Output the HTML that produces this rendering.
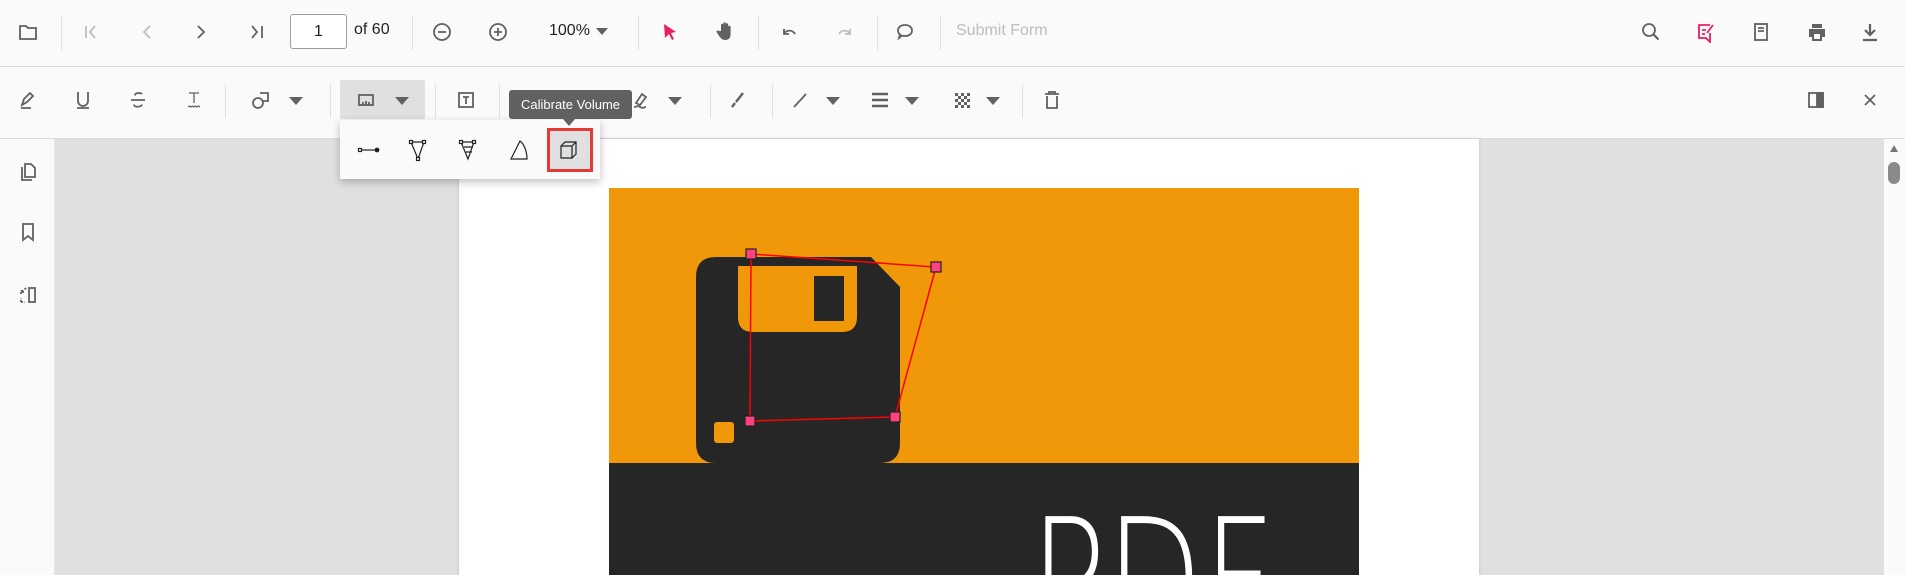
<!DOCTYPE html>
<html><head><meta charset="utf-8"><style>
*{margin:0;padding:0;box-sizing:border-box}
body{width:1905px;height:575px;overflow:hidden;background:#e0e0e0;font-family:"Liberation Sans",sans-serif;position:relative}
.a{position:absolute}
.ic{position:absolute;width:22px;height:22px;fill:none;stroke:#616161;stroke-width:1.8}
.sep{position:absolute;width:1px;background:#e0e0e0}
.dd{position:absolute;width:0;height:0;border-left:7px solid transparent;border-right:7px solid transparent;border-top:8px solid #616161}
</style></head><body>
<!-- toolbar 1 -->
<div class="a" style="left:0;top:0;width:1905px;height:67px;background:#fafafa;border-bottom:1px solid #dcdcdc"></div>
<div class="a" style="left:0;top:67px;width:1905px;height:72px;background:#fafafa;border-bottom:1px solid #dcdcdc"></div>
<!-- sidebar -->
<div class="a" style="left:0;top:139px;width:55px;height:436px;background:#fafafa;border-right:1px solid #e6e6e6"></div>
<!-- page -->
<div class="a" style="left:459px;top:139px;width:1020px;height:436px;background:#fff;box-shadow:0 0 3px rgba(0,0,0,.15)"></div>
<!-- scrollbar -->
<div class="a" style="left:1884px;top:139px;width:21px;height:436px;background:#fafafa"></div>
<div class="a" style="left:1890px;top:145px;width:0;height:0;border-left:4px solid transparent;border-right:4px solid transparent;border-bottom:7px solid #777"></div>
<div class="a" style="left:1888px;top:162px;width:12px;height:22px;border-radius:6px;background:#8a8a8a"></div>

<svg class="a" style="left:0;top:0" width="1905" height="575" viewBox="0 0 1905 575">
<!-- image -->
<rect x="609" y="188" width="750" height="275" fill="#f0980a"/>
<rect x="609" y="463" width="750" height="112" fill="#262626"/>
<path d="M716 257 H871 L900 287 V443 Q900 463 880 463 H716 Q696 463 696 443 V277 Q696 257 716 257 Z" fill="#262626"/>
<path d="M738 266 H857 V317 Q857 332 842 332 H753 Q738 332 738 317 Z" fill="#f0980a"/>
<rect x="814" y="276" width="30" height="45" fill="#262626"/>
<rect x="714" y="422" width="20" height="21" rx="3" fill="#f0980a"/>
<polygon points="751,254 936,267 895,417 750,421" fill="none" stroke="#f00" stroke-width="1.5"/>
<g fill="#ff4081" stroke="#222" stroke-width="1.2">
<rect x="746" y="249" width="10" height="10"/><rect x="931" y="262" width="10" height="10"/>
<rect x="890" y="412" width="10" height="10"/><rect x="745" y="416" width="10" height="10"/></g>
<text x="1030" y="640" font-family="DejaVu Sans" font-weight="200" font-size="170" fill="#fff" textLength="245" lengthAdjust="spacingAndGlyphs">PDF</text>
</svg>

<!-- toolbar1 icons -->
<svg class="ic" style="left:17px;top:21px" viewBox="0 0 22 22"><path d="M3 5h6l2 2h8v11H3z"/></svg>
<div class="sep" style="left:61px;top:16px;height:34px"></div>
<svg class="ic" style="left:80px;top:21px;stroke:#bdbdbd" viewBox="0 0 22 22"><path d="M6 5v12M15 5l-5 6 5 6"/></svg>
<svg class="ic" style="left:136px;top:21px;stroke:#bdbdbd" viewBox="0 0 22 22"><path d="M14 5l-6 6 6 6"/></svg>
<svg class="ic" style="left:190px;top:21px" viewBox="0 0 22 22"><path d="M8 5l6 6-6 6"/></svg>
<svg class="ic" style="left:246px;top:21px" viewBox="0 0 22 22"><path d="M6 5l5 6-5 6M16 5v12"/></svg>
<div class="a" style="left:290px;top:14px;width:57px;height:35px;border:1px solid #9e9e9e;border-radius:3px;background:#fff;font-size:16px;color:#222;text-align:center;line-height:33px">1</div>
<div class="a" style="left:354px;top:21px;font-size:16px;color:#222">of 60</div>
<div class="sep" style="left:412px;top:16px;height:34px"></div>
<svg class="ic" style="left:431px;top:21px" viewBox="0 0 22 22"><circle cx="11" cy="11" r="8"/><path d="M7 11h8"/></svg>
<svg class="ic" style="left:487px;top:21px" viewBox="0 0 22 22"><circle cx="11" cy="11" r="8"/><path d="M7 11h8M11 7v8"/></svg>
<div class="a" style="left:549px;top:22px;font-size:16px;color:#222">100%</div>
<div class="dd" style="left:596px;top:28px;border-left-width:6px;border-right-width:6px;border-top-width:7px"></div>
<div class="sep" style="left:638px;top:16px;height:34px"></div>
<svg class="ic" style="left:659px;top:21px;stroke:none;fill:#e91e63" viewBox="0 0 22 22"><path d="M5 3l12 8-5 1 3 6-2 1-3-6-4 4z"/></svg>
<svg class="ic" style="left:714px;top:20px;stroke:none;fill:#616161" viewBox="0 0 22 22"><path d="M7 11V5a1.2 1.2 0 012.4 0v5V3.5a1.2 1.2 0 012.4 0V10V4.5a1.2 1.2 0 012.4 0V11V7a1.2 1.2 0 012.4 0v7c0 4-2 6-5.5 6-3 0-4.5-2-6-4l-2.5-4c-.6-1 .8-2 1.6-1.2z"/></svg>
<div class="sep" style="left:758px;top:16px;height:34px"></div>
<svg class="ic" style="left:778px;top:21px" viewBox="0 0 22 22"><path d="M6 8v5h5M6 13c2-4 8-5 11 0"/></svg>
<svg class="ic" style="left:834px;top:21px;stroke:#bdbdbd" viewBox="0 0 22 22"><path d="M16 8v5h-5M16 13c-2-4-8-5-11 0"/></svg>
<div class="sep" style="left:877px;top:16px;height:34px"></div>
<svg class="ic" style="left:894px;top:21px" viewBox="0 0 22 22"><path d="M11 4c4.5 0 7 2.5 7 5.5S15.5 15 11 15c-1 0-2 0-3-.5L5 17l1-3.5C4.5 12.5 4 11 4 9.5 4 6.5 6.5 4 11 4z"/></svg>
<div class="sep" style="left:940px;top:16px;height:34px"></div>
<div class="a" style="left:956px;top:22px;font-size:16px;color:#bdbdbd">Submit Form</div>
<svg class="ic" style="left:1640px;top:21px" viewBox="0 0 22 22"><circle cx="9" cy="9" r="6"/><path d="M13.5 13.5l5 5" stroke-width="2.2"/></svg>
<svg class="ic" style="left:1695px;top:21px;stroke:#e91e63" viewBox="0 0 22 22"><path d="M15 4H4v13h7l4 4v-9M7 9h4M7 13h3M12 12l6-8"/></svg>
<svg class="ic" style="left:1750px;top:21px" viewBox="0 0 22 22"><rect x="5" y="3" width="12" height="16"/><path d="M8 7h6M8 10h6"/></svg>
<svg class="ic" style="left:1806px;top:21px;stroke:none;fill:#616161" viewBox="0 0 22 22"><path d="M6 3h10v4H6zM3 8h16v8h-3v4H6v-4H3zM8 13v5h6v-5z"/></svg>
<svg class="ic" style="left:1859px;top:21px" viewBox="0 0 22 22"><path d="M11 3v11M6 9l5 5 5-5M4 19h14" stroke-width="2.2"/></svg>

<!-- toolbar2 -->
<svg class="ic" style="left:17px;top:89px" viewBox="0 0 22 22"><path d="M5 16l2-6 6-6 3 3-6 6zM4 19h10"/></svg>
<svg class="ic" style="left:72px;top:89px" viewBox="0 0 22 22"><path d="M6 3v9a5 5 0 0010 0V3M5 19h12"/></svg>
<svg class="ic" style="left:127px;top:89px" viewBox="0 0 22 22"><path d="M15 5c-1-1-7-2-7 1.5M4 11h14M7 15.5c0 3 7 3 8 0"/></svg>
<svg class="ic" style="left:183px;top:89px" viewBox="0 0 22 22"><path d="M6 4h10M11 4v10M5 18l1.5-1 1.5 1 1.5-1 1.5 1 1.5-1 1.5 1 1.5-1 1.5 1" stroke-width="1.3"/></svg>
<div class="sep" style="left:225px;top:84px;height:34px"></div>
<svg class="ic" style="left:250px;top:89px" viewBox="0 0 22 22"><circle cx="8" cy="14" r="5"/><path d="M10 4h8v8h-6"/></svg>
<div class="dd" style="left:289px;top:97px"></div>
<div class="sep" style="left:330px;top:84px;height:34px"></div>
<div class="a" style="left:340px;top:80px;width:85px;height:39px;background:#e0e0e0;border-radius:2px"></div>
<svg class="ic" style="left:355px;top:89px" viewBox="0 0 22 22"><rect x="4" y="6" width="14" height="10"/><path d="M8 16v-3M11 16v-4M14 16v-3"/></svg>
<div class="dd" style="left:395px;top:97px"></div>
<div class="sep" style="left:435px;top:84px;height:34px"></div>
<svg class="ic" style="left:455px;top:89px" viewBox="0 0 22 22"><rect x="4" y="4" width="14" height="14"/><path d="M8 8h6M11 8v7"/></svg>
<div class="sep" style="left:499px;top:84px;height:34px"></div>
<svg class="ic" style="left:630px;top:89px" viewBox="0 0 22 22"><path d="M6 14l6-9 4 3-6 8zM4 18c3 0 3-2 6 0s4 0 6 0"/></svg>
<div class="dd" style="left:668px;top:97px"></div>
<div class="sep" style="left:710px;top:84px;height:34px"></div>
<svg class="ic" style="left:726px;top:89px" viewBox="0 0 22 22"><path d="M17 4l-7 9M9 14l-3 4" stroke-width="2.4"/></svg>
<div class="sep" style="left:772px;top:84px;height:34px"></div>
<svg class="ic" style="left:789px;top:89px" viewBox="0 0 22 22"><path d="M5 18l12-13"/></svg>
<div class="dd" style="left:826px;top:97px"></div>
<svg class="ic" style="left:869px;top:89px" viewBox="0 0 22 22"><path d="M3 5h16M3 11h16M3 17h16" stroke-width="2.5"/></svg>
<div class="dd" style="left:905px;top:97px"></div>
<svg class="ic" style="left:951px;top:89px;stroke:none;fill:#616161" viewBox="0 0 22 22"><path d="M4 4h3v3H4zM10 4h3v3h-3zM16 4h3v3h-3zM7 7h3v3H7zM13 7h3v3h-3zM4 10h3v3H4zM10 10h3v3h-3zM16 10h3v3h-3zM7 13h3v3H7zM13 13h3v3h-3zM4 16h3v3H4zM10 16h3v3h-3zM16 16h3v3h-3z"/></svg>
<div class="dd" style="left:986px;top:97px"></div>
<div class="sep" style="left:1022px;top:84px;height:34px"></div>
<svg class="ic" style="left:1041px;top:89px" viewBox="0 0 22 22"><path d="M4 5h14M8 5V3h6v2M6 7v12h10V7"/></svg>
<svg class="ic" style="left:1805px;top:89px" viewBox="0 0 22 22"><rect x="4" y="4" width="14" height="14"/><rect x="12" y="4" width="6" height="14" fill="#616161"/></svg>
<svg class="ic" style="left:1859px;top:89px" viewBox="0 0 22 22"><path d="M6 6l10 10M16 6L6 16"/></svg>

<!-- sidebar icons -->
<svg class="ic" style="left:17px;top:161px" viewBox="0 0 22 22"><path d="M8 3h6l4 4v9H8zM5 6v13h10"/></svg>
<svg class="ic" style="left:17px;top:221px" viewBox="0 0 22 22"><path d="M6 3h10v16l-5-4-5 4z"/></svg>
<svg class="ic" style="left:17px;top:284px" viewBox="0 0 22 22"><rect x="12" y="4" width="6" height="14"/><path d="M4 10V6M4 18v-4M4 18h4M9 4L5 8M5 8h3M5 8V5" stroke-dasharray="2 1.5"/></svg>

<!-- popup -->
<div class="a" style="left:340px;top:120px;width:260px;height:59px;background:#fafafa;box-shadow:0 3px 8px rgba(0,0,0,.25)"></div>
<div class="a" style="left:547px;top:128px;width:46px;height:44px;border:3px solid #e53935;background:#e0e0e0"></div>
<svg class="a" style="left:340px;top:120px" width="260" height="59" viewBox="0 0 260 59" fill="none" stroke="#222" stroke-width="1.2">
<path d="M20 30h16"/><rect x="18.5" y="28.5" width="3" height="3" fill="#fff"/><circle cx="37" cy="30" r="1.8" fill="#222"/>
<path d="M71 22h13l-6 17zM71 22l7 17"/><rect x="69.5" y="20.5" width="3" height="3" fill="#fff"/><rect x="82.5" y="20.5" width="3" height="3" fill="#fff"/><rect x="76.5" y="37.5" width="3" height="3" fill="#fff"/>
<path d="M121 22h13l-6 17zM121 22l7 17M124 27h9M126 32h6"/><rect x="119.5" y="20.5" width="3" height="3" fill="#fff"/><rect x="132.5" y="20.5" width="3" height="3" fill="#fff"/>
<path d="M171 39h16c0-8-3-15-7-18z"/>
<path d="M221 26h11v12h-11zM221 26l4-4h11v12l-4 4M232 26l4-4"/>
</svg>
<!-- tooltip -->
<div class="a" style="left:509px;top:90px;width:123px;height:29px;background:#616161;border-radius:3px;color:#fff;font-size:13px;line-height:29px;text-align:center">Calibrate Volume</div>
<div class="a" style="left:563px;top:119px;width:0;height:0;border-left:6px solid transparent;border-right:6px solid transparent;border-top:7px solid #616161"></div>
</body></html>
